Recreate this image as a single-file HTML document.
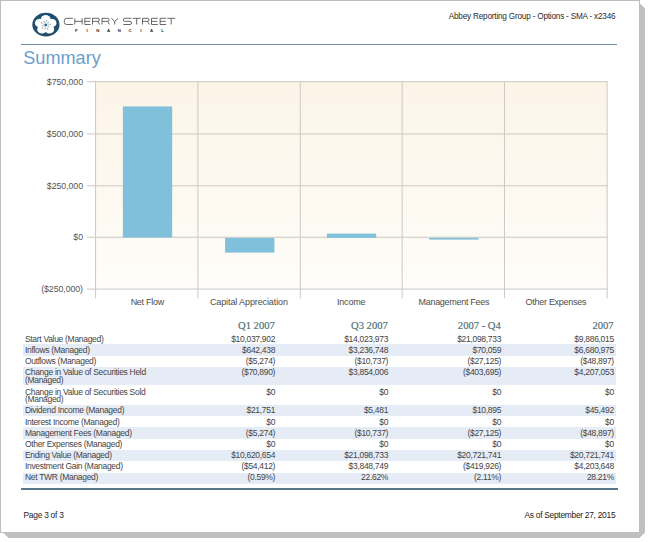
<!DOCTYPE html>
<html><head><meta charset="utf-8"><style>
html,body{margin:0;padding:0;background:#fff;}
body{position:relative;width:649px;height:542px;overflow:hidden;font-family:"Liberation Sans", sans-serif;}
.t{position:absolute;white-space:nowrap;}
</style></head><body>
<svg style="position:absolute;left:0;top:0" width="649" height="542"><polygon points="4,4 640,4 645,9 645,532.5 639.5,538 8,538 3,533 3,4" fill="#c0c0c0" shape-rendering="crispEdges"/></svg>
<div style="position:absolute;left:0;top:0;width:638px;height:531px;border:1px solid #bebebe;background:#fff"></div>
<div class="t" style="right:33.60px;top:12.86px;font-size:8.2px;line-height:8.2px;color:#2b2b2b;letter-spacing:-0.2px;">Abbey Reporting Group - Options - SMA - x2346</div>
<div style="position:absolute;left:21px;top:44px;width:596px;height:1px;background:#6e8fa4"></div>
<div class="t" style="left:23.30px;top:49.28px;font-size:18.1px;line-height:18.1px;color:#6d9ecb;">Summary</div>
<svg style="position:absolute;left:0;top:0" width="649" height="320"><defs><linearGradient id="g" x1="0" y1="0" x2="0" y2="1"><stop offset="0" stop-color="#fcf4e7"/><stop offset="1" stop-color="#fefdf9"/></linearGradient></defs><rect x="95.07" y="81.19" width="511.55" height="207.39" fill="url(#g)"/><rect x="87" y="81.19" width="520.62" height="1" fill="#ccc9c4"/><rect x="87" y="133.47" width="520.62" height="1" fill="#ccc9c4"/><rect x="87" y="185.32" width="520.62" height="1" fill="#ccc9c4"/><rect x="87" y="236.73" width="520.62" height="1" fill="#ccc9c4"/><rect x="87" y="288.58" width="520.62" height="1" fill="#ccc9c4"/><rect x="95.07" y="81.19" width="1" height="217.11" fill="#ccc9c4"/><rect x="197.39" y="81.19" width="1" height="217.11" fill="#ccc9c4"/><rect x="299.76" y="81.19" width="1" height="217.11" fill="#ccc9c4"/><rect x="401.64" y="81.19" width="1" height="217.11" fill="#ccc9c4"/><rect x="503.97" y="81.19" width="1" height="217.11" fill="#ccc9c4"/><rect x="606.62" y="81.19" width="1" height="217.11" fill="#ccc9c4"/><rect x="122.87" y="106.43" width="49.3" height="131.17" fill="#80c0da"/><rect x="225.1" y="237.9" width="49.3" height="14.70" fill="#80c0da"/><rect x="326.9" y="233.6" width="49.3" height="4.30" fill="#80c0da"/><rect x="429.2" y="237.9" width="49.3" height="1.70" fill="#80c0da"/></svg>
<div class="t" style="right:566.03px;top:78.25px;font-size:8.8px;line-height:8.8px;color:#555;letter-spacing:-0.07px;">$750,000</div>
<div class="t" style="right:566.03px;top:130.25px;font-size:8.8px;line-height:8.8px;color:#555;letter-spacing:-0.07px;">$500,000</div>
<div class="t" style="right:566.03px;top:182.25px;font-size:8.8px;line-height:8.8px;color:#555;letter-spacing:-0.07px;">$250,000</div>
<div class="t" style="right:566.03px;top:233.25px;font-size:8.8px;line-height:8.8px;color:#555;letter-spacing:-0.07px;">$0</div>
<div class="t" style="right:566.03px;top:285.25px;font-size:8.8px;line-height:8.8px;color:#555;letter-spacing:-0.07px;">($250,000)</div>
<div class="t" style="left:-2.71px;width:300px;text-align:center;top:297.68px;font-size:9.0px;line-height:9.0px;color:#4d4d4d;letter-spacing:-0.276px;">Net Flow</div>
<div class="t" style="left:98.90px;width:300px;text-align:center;top:297.68px;font-size:9.0px;line-height:9.0px;color:#4d4d4d;letter-spacing:-0.108px;">Capital Appreciation</div>
<div class="t" style="left:201.23px;width:300px;text-align:center;top:297.68px;font-size:9.0px;line-height:9.0px;color:#4d4d4d;letter-spacing:-0.168px;">Income</div>
<div class="t" style="left:303.89px;width:300px;text-align:center;top:297.68px;font-size:9.0px;line-height:9.0px;color:#4d4d4d;letter-spacing:-0.289px;">Management Fees</div>
<div class="t" style="left:405.89px;width:300px;text-align:center;top:297.68px;font-size:9.0px;line-height:9.0px;color:#4d4d4d;letter-spacing:-0.288px;">Other Expenses</div>
<div class="t" style="right:374.20px;top:320.92px;font-size:10.6px;line-height:10.6px;color:#4d6d78;font-family:'Liberation Serif',serif;-webkit-text-stroke:0.15px #4d6d78;">Q1 2007</div>
<div class="t" style="right:261.20px;top:320.92px;font-size:10.6px;line-height:10.6px;color:#4d6d78;font-family:'Liberation Serif',serif;-webkit-text-stroke:0.15px #4d6d78;">Q3 2007</div>
<div class="t" style="right:148.20px;top:320.92px;font-size:10.6px;line-height:10.6px;color:#4d6d78;font-family:'Liberation Serif',serif;-webkit-text-stroke:0.15px #4d6d78;">2007 - Q4</div>
<div class="t" style="right:35.40px;top:320.92px;font-size:10.6px;line-height:10.6px;color:#4d6d78;font-family:'Liberation Serif',serif;-webkit-text-stroke:0.15px #4d6d78;">2007</div>
<div class="t" style="left:24.90px;top:334.60px;font-size:8.5px;line-height:8.5px;color:#444444;letter-spacing:-0.3px;">Start Value (Managed)</div>
<div class="t" style="right:373.90px;top:334.60px;font-size:8.5px;line-height:8.5px;color:#444444;letter-spacing:-0.3px;">$10,037,902</div>
<div class="t" style="right:260.90px;top:334.60px;font-size:8.5px;line-height:8.5px;color:#444444;letter-spacing:-0.3px;">$14,023,973</div>
<div class="t" style="right:147.90px;top:334.60px;font-size:8.5px;line-height:8.5px;color:#444444;letter-spacing:-0.3px;">$21,098,733</div>
<div class="t" style="right:35.10px;top:334.60px;font-size:8.5px;line-height:8.5px;color:#444444;letter-spacing:-0.3px;">$9,886,015</div>
<div style="position:absolute;left:23px;top:343.60px;width:592.6px;height:12.30px;background:#e6ecf6"></div>
<div class="t" style="left:24.90px;top:345.60px;font-size:8.5px;line-height:8.5px;color:#444444;letter-spacing:-0.3px;">Inflows (Managed)</div>
<div class="t" style="right:373.90px;top:345.60px;font-size:8.5px;line-height:8.5px;color:#444444;letter-spacing:-0.3px;">$642,438</div>
<div class="t" style="right:260.90px;top:345.60px;font-size:8.5px;line-height:8.5px;color:#444444;letter-spacing:-0.3px;">$3,236,748</div>
<div class="t" style="right:147.90px;top:345.60px;font-size:8.5px;line-height:8.5px;color:#444444;letter-spacing:-0.3px;">$70,059</div>
<div class="t" style="right:35.10px;top:345.60px;font-size:8.5px;line-height:8.5px;color:#444444;letter-spacing:-0.3px;">$6,680,975</div>
<div class="t" style="left:24.90px;top:356.50px;font-size:8.5px;line-height:8.5px;color:#444444;letter-spacing:-0.3px;">Outflows (Managed)</div>
<div class="t" style="right:373.90px;top:356.50px;font-size:8.5px;line-height:8.5px;color:#444444;letter-spacing:-0.3px;">($5,274)</div>
<div class="t" style="right:260.90px;top:356.50px;font-size:8.5px;line-height:8.5px;color:#444444;letter-spacing:-0.3px;">($10,737)</div>
<div class="t" style="right:147.90px;top:356.50px;font-size:8.5px;line-height:8.5px;color:#444444;letter-spacing:-0.3px;">($27,125)</div>
<div class="t" style="right:35.10px;top:356.50px;font-size:8.5px;line-height:8.5px;color:#444444;letter-spacing:-0.3px;">($48,897)</div>
<div style="position:absolute;left:23px;top:366.60px;width:592.6px;height:18.70px;background:#e6ecf6"></div>
<div class="t" style="left:24.90px;top:368.40px;font-size:8.5px;line-height:8.5px;color:#444444;letter-spacing:-0.3px;">Change in Value of Securities Held</div>
<div class="t" style="left:24.90px;top:375.80px;font-size:8.5px;line-height:8.5px;color:#444444;letter-spacing:-0.3px;">(Managed)</div>
<div class="t" style="right:373.90px;top:368.40px;font-size:8.5px;line-height:8.5px;color:#444444;letter-spacing:-0.3px;">($70,890)</div>
<div class="t" style="right:260.90px;top:368.40px;font-size:8.5px;line-height:8.5px;color:#444444;letter-spacing:-0.3px;">$3,854,006</div>
<div class="t" style="right:147.90px;top:368.40px;font-size:8.5px;line-height:8.5px;color:#444444;letter-spacing:-0.3px;">($403,695)</div>
<div class="t" style="right:35.10px;top:368.40px;font-size:8.5px;line-height:8.5px;color:#444444;letter-spacing:-0.3px;">$4,207,053</div>
<div class="t" style="left:24.90px;top:387.50px;font-size:8.5px;line-height:8.5px;color:#444444;letter-spacing:-0.3px;">Change in Value of Securities Sold</div>
<div class="t" style="left:24.90px;top:394.90px;font-size:8.5px;line-height:8.5px;color:#444444;letter-spacing:-0.3px;">(Managed)</div>
<div class="t" style="right:373.90px;top:387.50px;font-size:8.5px;line-height:8.5px;color:#444444;letter-spacing:-0.3px;">$0</div>
<div class="t" style="right:260.90px;top:387.50px;font-size:8.5px;line-height:8.5px;color:#444444;letter-spacing:-0.3px;">$0</div>
<div class="t" style="right:147.90px;top:387.50px;font-size:8.5px;line-height:8.5px;color:#444444;letter-spacing:-0.3px;">$0</div>
<div class="t" style="right:35.10px;top:387.50px;font-size:8.5px;line-height:8.5px;color:#444444;letter-spacing:-0.3px;">$0</div>
<div style="position:absolute;left:23px;top:405.10px;width:592.6px;height:10.90px;background:#e6ecf6"></div>
<div class="t" style="left:24.90px;top:405.70px;font-size:8.5px;line-height:8.5px;color:#444444;letter-spacing:-0.3px;">Dividend Income (Managed)</div>
<div class="t" style="right:373.90px;top:405.70px;font-size:8.5px;line-height:8.5px;color:#444444;letter-spacing:-0.3px;">$21,751</div>
<div class="t" style="right:260.90px;top:405.70px;font-size:8.5px;line-height:8.5px;color:#444444;letter-spacing:-0.3px;">$5,481</div>
<div class="t" style="right:147.90px;top:405.70px;font-size:8.5px;line-height:8.5px;color:#444444;letter-spacing:-0.3px;">$10,895</div>
<div class="t" style="right:35.10px;top:405.70px;font-size:8.5px;line-height:8.5px;color:#444444;letter-spacing:-0.3px;">$45,492</div>
<div class="t" style="left:24.90px;top:417.50px;font-size:8.5px;line-height:8.5px;color:#444444;letter-spacing:-0.3px;">Interest Income (Managed)</div>
<div class="t" style="right:373.90px;top:417.50px;font-size:8.5px;line-height:8.5px;color:#444444;letter-spacing:-0.3px;">$0</div>
<div class="t" style="right:260.90px;top:417.50px;font-size:8.5px;line-height:8.5px;color:#444444;letter-spacing:-0.3px;">$0</div>
<div class="t" style="right:147.90px;top:417.50px;font-size:8.5px;line-height:8.5px;color:#444444;letter-spacing:-0.3px;">$0</div>
<div class="t" style="right:35.10px;top:417.50px;font-size:8.5px;line-height:8.5px;color:#444444;letter-spacing:-0.3px;">$0</div>
<div style="position:absolute;left:23px;top:427.20px;width:592.6px;height:11.40px;background:#e6ecf6"></div>
<div class="t" style="left:24.90px;top:428.80px;font-size:8.5px;line-height:8.5px;color:#444444;letter-spacing:-0.3px;">Management Fees (Managed)</div>
<div class="t" style="right:373.90px;top:428.80px;font-size:8.5px;line-height:8.5px;color:#444444;letter-spacing:-0.3px;">($5,274)</div>
<div class="t" style="right:260.90px;top:428.80px;font-size:8.5px;line-height:8.5px;color:#444444;letter-spacing:-0.3px;">($10,737)</div>
<div class="t" style="right:147.90px;top:428.80px;font-size:8.5px;line-height:8.5px;color:#444444;letter-spacing:-0.3px;">($27,125)</div>
<div class="t" style="right:35.10px;top:428.80px;font-size:8.5px;line-height:8.5px;color:#444444;letter-spacing:-0.3px;">($48,897)</div>
<div class="t" style="left:24.90px;top:439.50px;font-size:8.5px;line-height:8.5px;color:#444444;letter-spacing:-0.3px;">Other Expenses (Managed)</div>
<div class="t" style="right:373.90px;top:439.50px;font-size:8.5px;line-height:8.5px;color:#444444;letter-spacing:-0.3px;">$0</div>
<div class="t" style="right:260.90px;top:439.50px;font-size:8.5px;line-height:8.5px;color:#444444;letter-spacing:-0.3px;">$0</div>
<div class="t" style="right:147.90px;top:439.50px;font-size:8.5px;line-height:8.5px;color:#444444;letter-spacing:-0.3px;">$0</div>
<div class="t" style="right:35.10px;top:439.50px;font-size:8.5px;line-height:8.5px;color:#444444;letter-spacing:-0.3px;">$0</div>
<div style="position:absolute;left:23px;top:450.10px;width:592.6px;height:10.90px;background:#e6ecf6"></div>
<div class="t" style="left:24.90px;top:451.20px;font-size:8.5px;line-height:8.5px;color:#444444;letter-spacing:-0.3px;">Ending Value (Managed)</div>
<div class="t" style="right:373.90px;top:451.20px;font-size:8.5px;line-height:8.5px;color:#444444;letter-spacing:-0.3px;">$10,620,654</div>
<div class="t" style="right:260.90px;top:451.20px;font-size:8.5px;line-height:8.5px;color:#444444;letter-spacing:-0.3px;">$21,098,733</div>
<div class="t" style="right:147.90px;top:451.20px;font-size:8.5px;line-height:8.5px;color:#444444;letter-spacing:-0.3px;">$20,721,741</div>
<div class="t" style="right:35.10px;top:451.20px;font-size:8.5px;line-height:8.5px;color:#444444;letter-spacing:-0.3px;">$20,721,741</div>
<div class="t" style="left:24.90px;top:462.10px;font-size:8.5px;line-height:8.5px;color:#444444;letter-spacing:-0.3px;">Investment Gain (Managed)</div>
<div class="t" style="right:373.90px;top:462.10px;font-size:8.5px;line-height:8.5px;color:#444444;letter-spacing:-0.3px;">($54,412)</div>
<div class="t" style="right:260.90px;top:462.10px;font-size:8.5px;line-height:8.5px;color:#444444;letter-spacing:-0.3px;">$3,848,749</div>
<div class="t" style="right:147.90px;top:462.10px;font-size:8.5px;line-height:8.5px;color:#444444;letter-spacing:-0.3px;">($419,926)</div>
<div class="t" style="right:35.10px;top:462.10px;font-size:8.5px;line-height:8.5px;color:#444444;letter-spacing:-0.3px;">$4,203,648</div>
<div style="position:absolute;left:23px;top:472.50px;width:592.6px;height:11.40px;background:#e6ecf6"></div>
<div class="t" style="left:24.90px;top:473.40px;font-size:8.5px;line-height:8.5px;color:#444444;letter-spacing:-0.3px;">Net TWR (Managed)</div>
<div class="t" style="right:373.90px;top:473.40px;font-size:8.5px;line-height:8.5px;color:#444444;letter-spacing:-0.3px;">(0.59%)</div>
<div class="t" style="right:260.90px;top:473.40px;font-size:8.5px;line-height:8.5px;color:#444444;letter-spacing:-0.3px;">22.62%</div>
<div class="t" style="right:147.90px;top:473.40px;font-size:8.5px;line-height:8.5px;color:#444444;letter-spacing:-0.3px;">(2.11%)</div>
<div class="t" style="right:35.10px;top:473.40px;font-size:8.5px;line-height:8.5px;color:#444444;letter-spacing:-0.3px;">28.21%</div>
<div style="position:absolute;left:21px;top:488px;width:596.5px;height:2px;background:#557889"></div>
<div class="t" style="left:23.50px;top:511.29px;font-size:8.4px;line-height:8.4px;color:#222;letter-spacing:-0.25px;">Page 3 of 3</div>
<div class="t" style="right:33.73px;top:511.29px;font-size:8.4px;line-height:8.4px;color:#222;letter-spacing:-0.27px;">As of September 27, 2015</div>
<svg style="position:absolute;left:0;top:0" width="200" height="44">
<ellipse cx="45.9" cy="24.7" rx="13.6" ry="11.9" fill="#1f4f6d"/>
<g transform="translate(45.7,24.8) scale(1.04,0.92)" fill="#fff"><circle cx="0" cy="-6.1" r="4.6" transform="rotate(0)"/><circle cx="0" cy="-6.1" r="4.6" transform="rotate(72)"/><circle cx="0" cy="-6.1" r="4.6" transform="rotate(144)"/><circle cx="0" cy="-6.1" r="4.6" transform="rotate(216)"/><circle cx="0" cy="-6.1" r="4.6" transform="rotate(288)"/><circle cx="0" cy="0" r="4"/></g>
<g transform="translate(45.7,24.9)" stroke="#8aabbf" stroke-width="0.45" fill="#8aabbf"><line x1="0" y1="0" x2="0.80" y2="-4.53"/><circle cx="0.80" cy="-4.53" r="0.45"/><line x1="0" y1="0" x2="2.59" y2="-2.50"/><circle cx="2.59" cy="-2.50" r="0.45"/><line x1="0" y1="0" x2="4.56" y2="-0.64"/><circle cx="4.56" cy="-0.64" r="0.45"/><line x1="0" y1="0" x2="3.18" y2="1.69"/><circle cx="3.18" cy="1.69" r="0.45"/><line x1="0" y1="0" x2="2.02" y2="4.13"/><circle cx="2.02" cy="4.13" r="0.45"/><line x1="0" y1="0" x2="-0.63" y2="3.55"/><circle cx="-0.63" cy="3.55" r="0.45"/><line x1="0" y1="0" x2="-3.31" y2="3.20"/><circle cx="-3.31" cy="3.20" r="0.45"/><line x1="0" y1="0" x2="-3.56" y2="0.50"/><circle cx="-3.56" cy="0.50" r="0.45"/><line x1="0" y1="0" x2="-4.06" y2="-2.16"/><circle cx="-4.06" cy="-2.16" r="0.45"/><line x1="0" y1="0" x2="-1.58" y2="-3.24"/><circle cx="-1.58" cy="-3.24" r="0.45"/></g>
<circle cx="45.7" cy="24.9" r="1.2" fill="#24587a"/>
<path d="M72.9 18.3H66.9Q64.3 18.3 64.3 20.6V22.2Q64.3 24.5 66.9 24.5H72.9 M74.8 18.3V24.5M82.2 18.3V24.5M74.8 21.35H82.2 M90.6 18.3H84.8V24.5H90.6M84.8 21.35H90.19999999999999 M92.5 24.5V18.3H97.9Q99.4 18.3 99.4 19.8Q99.4 21.35 97.9 21.35H92.5M98.0 21.35L99.60000000000001 24.5 M102.0 24.5V18.3H107.6Q109.1 18.3 109.1 19.8Q109.1 21.35 107.6 21.35H102.0M107.69999999999999 21.35L109.3 24.5 M111.3 18.3L114.7 21.35L118.2 18.3M114.7 21.35V24.5 M131.5 18.3H124.8Q123.3 18.3 123.3 19.83Q123.3 21.35 124.8 21.35H130.0Q131.5 21.35 131.5 22.93Q131.5 24.5 130.0 24.5H123.3 M132.8 18.3H140.6M136.7 18.3V24.5 M142.5 24.5V18.3H147.5Q149.0 18.3 149.0 19.8Q149.0 21.35 147.5 21.35H142.5M147.6 21.35L149.2 24.5 M157.8 18.3H151.5V24.5H157.8M151.5 21.35H157.4 M166.1 18.3H160.1V24.5H166.1M160.1 21.35H165.7 M167.3 18.3H175.1M171.2 18.3V24.5" fill="none" stroke="#4d4d4d" stroke-width="0.85"/>
<text x="76.20" y="31.8" text-anchor="middle" font-family="Liberation Sans" font-weight="bold" font-size="4.3" fill="#2a2a2a">F</text><text x="86.98" y="31.8" text-anchor="middle" font-family="Liberation Sans" font-weight="bold" font-size="4.3" fill="#2a2a2a">I</text><text x="97.76" y="31.8" text-anchor="middle" font-family="Liberation Sans" font-weight="bold" font-size="4.3" fill="#2a2a2a">N</text><text x="108.54" y="31.8" text-anchor="middle" font-family="Liberation Sans" font-weight="bold" font-size="4.3" fill="#2a2a2a">A</text><text x="119.32" y="31.8" text-anchor="middle" font-family="Liberation Sans" font-weight="bold" font-size="4.3" fill="#2a2a2a">N</text><text x="130.10" y="31.8" text-anchor="middle" font-family="Liberation Sans" font-weight="bold" font-size="4.3" fill="#2a2a2a">C</text><text x="140.88" y="31.8" text-anchor="middle" font-family="Liberation Sans" font-weight="bold" font-size="4.3" fill="#2a2a2a">I</text><text x="151.66" y="31.8" text-anchor="middle" font-family="Liberation Sans" font-weight="bold" font-size="4.3" fill="#2a2a2a">A</text><text x="162.44" y="31.8" text-anchor="middle" font-family="Liberation Sans" font-weight="bold" font-size="4.3" fill="#2a2a2a">L</text>
</svg>
</body></html>
